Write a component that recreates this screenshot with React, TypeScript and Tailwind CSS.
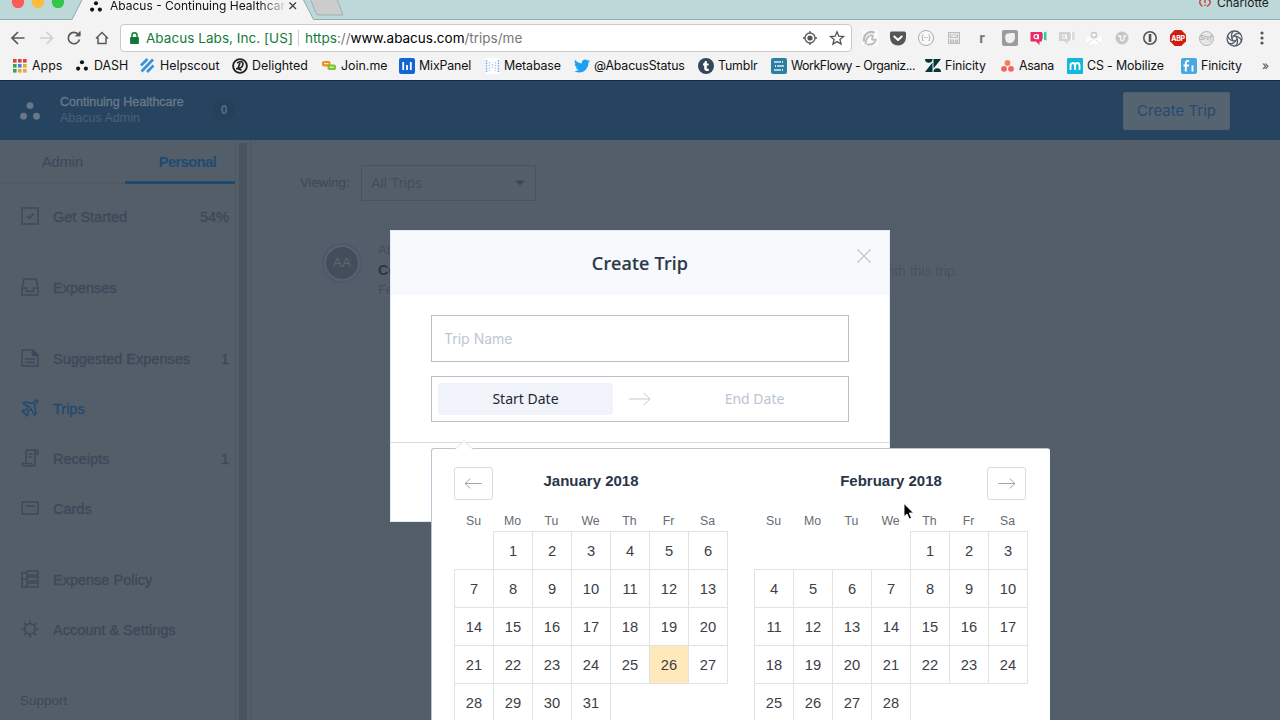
import React from "react";
import { FaTwitter, FaTumblr, FaGetPocket } from "react-icons/fa";

/* ---------- Browser chrome ---------- */

function AbacusDots({ className, fill }: { className: string; fill: string }) {
  return (
    <svg className={className} viewBox="0 0 20 18" fill={fill}>
      <circle cx="10" cy="3.6" r="3.4" />
      <circle cx="3.5" cy="14.2" r="3.4" />
      <circle cx="16.5" cy="14.2" r="3.4" />
    </svg>
  );
}

function TabStrip() {
  return (
    <div className="relative flex h-[20px] shrink-0 items-start bg-[#bcd8d9]">
      <svg className="absolute inset-0" width="1280" height="20">
        <path d="M0 19.5H1280" stroke="#93b0b1" />
        <path d="M72 20L83.5 -3H302L314 20Z" fill="#f4f4f5" />
        <path d="M0 19.5H72L83.5 -3M302 -3L313.5 19.5H320" fill="none" stroke="#93a9ab" />
        <path d="M310 -2L315.5 12Q316.500 15 319 15H343L336.500 -2Z" fill="#cbcdcd" stroke="#9fb0b1" />
        <circle cx="18" cy="2" r="6.200" fill="#fc5b57" />
        <circle cx="38" cy="2" r="6.200" fill="#fdbc40" />
        <circle cx="58" cy="2" r="6.200" fill="#34c648" />
        <path d="M289.500 2.500L296 9M296 2.500L289.500 9" stroke="#3f3f3f" strokeWidth="1.300" />
        <g fill="none" stroke="#c94a3e" strokeWidth="1.500">
          <path d="M1201.500 -1Q1197.500 2.500 1202.500 6.500M1208 -1Q1213 2.500 1207 6.500" />
          <path d="M1205 -1V3M1205 4.500V6" />
        </g>
      </svg>
      <AbacusDots className="relative ml-[90px] mt-px h-[11px] w-[12px]" fill="#111" />
      <div className="relative ml-[8px] -mt-[2px] w-[175px] whitespace-nowrap bg-gradient-to-r from-[#111] from-85% to-[#d8d8d8] bg-clip-text text-[12px] leading-[16px] text-transparent">
        Abacus - Continuing Healthcar
      </div>
      <div className="relative ml-auto mr-[12px] -mt-[5px] w-[51px] whitespace-nowrap text-[12px] leading-[16px] text-[#222]">
        Charlotte
      </div>
    </div>
  );
}

function NavIcons() {
  return (
    <svg width="120" height="32" fill="none" stroke="#595959" strokeWidth="1.700">
      <path d="M24.500 18H12.500M18 12L12 18L18 24" />
      <path d="M40 18H52M46.500 12L52.500 18L46.500 24" stroke="#cfcfcf" />
      <path d="M78.500 14.500A5.700 5.700 0 1 0 79.500 19.500" />
      <path d="M80.200 11.500V16H75.500Z" fill="#595959" strokeWidth="0.800" />
      <path d="M96 18.500L102 12.500L108 18.500M98 17.500V23.500H106V17.500" strokeWidth="1.500" />
    </svg>
  );
}

function AddressBar() {
  return (
    <div className="my-[4px] flex h-[28px] w-[732px] items-center rounded-[4px] border border-[#c9c9c9] bg-white text-[13.5px]">
      <svg className="ml-[8px] h-[14px] w-[11px]" viewBox="0 0 10 12">
        <rect x="1" y="5" width="8" height="6.500" rx="0.700" fill="#0b7a35" />
        <path d="M2.700 5.500V3.500a2.300 2.300 0 0 1 4.600 0V5.500" fill="none" stroke="#0b7a35" strokeWidth="1.300" />
      </svg>
      <span className="ml-[6px] w-[152px] whitespace-nowrap tracking-[0.05px] text-[#147a3a]">Abacus Labs, Inc. [US]</span>
      <span className="h-[16px] w-px bg-[#cfcfcf]" />
      <span className="ml-[6px] whitespace-nowrap text-[#777]">
        <span className="text-[#147a3a]">https</span>://<span className="text-black">www.abacus.com</span>/trips/me
      </span>
      <svg className="ml-auto mr-[5px]" width="44" height="18" fill="none" stroke="#555">
        <circle cx="8" cy="9" r="5" strokeWidth="1.300" />
        <circle cx="8" cy="9" r="2.600" fill="#555" stroke="none" />
        <path d="M8 2V4M8 14V16M1 9H3M13 9H15" strokeWidth="1.300" />
        <path d="M35 2.800L36.800 7.200L41.500 7.500L37.900 10.500L39.100 15.100L35 12.600L30.900 15.100L32.100 10.500L28.500 7.500L33.200 7.200Z" strokeWidth="1.300" />
      </svg>
    </div>
  );
}

function Extensions() {
  const cell = "flex h-[36px] w-[28px] items-center justify-center";
  return (
    <div className="ml-[4px] flex">
      <div className={cell}>
        <svg width="16" height="16" viewBox="0 0 16 16">
          <rect width="16" height="16" fill="#fafafa" />
          <path d="M2 11.500Q1.500 5 6 2.800Q10 1 12.500 3" fill="none" stroke="#b9b9b9" strokeWidth="2.200" />
          <path d="M3.500 14.500Q4 6.500 8.500 5.300Q12 5 10.300 8Q8.800 10.800 14.500 9.500" fill="none" stroke="#bdbdbd" strokeWidth="1.900" />
          <path d="M5 14.500Q11 15.500 14 10.500" fill="none" stroke="#b9b9b9" strokeWidth="1.600" />
        </svg>
      </div>
      <div className={cell}>
        <svg width="16" height="15" viewBox="0 0 16 15">
          <path d="M1.500 0.500H14.500Q16 0.500 16 2V6.500A8 8 0 0 1 0 6.500V2Q0 0.500 1.500 0.500Z" fill="#555" />
          <path d="M4.300 5.500L8 9L11.700 5.500" fill="none" stroke="#fff" strokeWidth="2" strokeLinecap="round" strokeLinejoin="round" />
        </svg>
      </div>
      <div className={cell}>
        <span className="flex h-[16px] w-[16px] items-center justify-center rounded-full border border-[#aaa] bg-[#f9f9f9] pb-px text-[7px] leading-none text-[#888]">{"{··}"}</span>
      </div>
      <div className={cell}>
        <svg width="12" height="12" fill="none" stroke="#bcbcbc" strokeWidth="1.200">
          <path d="M0.600 0.600H11.400V11.400H0.600ZM2.500 3H9.500V5.500H2.500ZM2.500 8H5.500V9.800H2.500ZM7.500 8H9.500V9.800H7.500Z" />
        </svg>
      </div>
      <div className={cell + " pb-px text-[14px] font-bold text-[#777]"}>r</div>
      <div className={cell}>
        <svg width="16" height="16" viewBox="0 0 16 16">
          <rect width="16" height="16" rx="2" fill="#9b9b9b" />
          <path d="M4 4Q8 2.500 12.500 3Q14 8 11.500 11.500Q8 14.500 4.500 12Q2 8 4 4Z" fill="#f0f0f0" />
        </svg>
      </div>
      <div className={cell}>
        <svg width="17" height="14" viewBox="0 0 17 14">
          <path d="M11 2.500L16.500 0.500V9.500L11 8Z" fill="#43c59b" />
          <path d="M0.500 1H12V10.500H9.500V14L6 10.500H0.500Z" fill="#e92a63" />
          <circle cx="6" cy="5.700" r="2" fill="none" stroke="#fff" strokeWidth="1.200" />
          <path d="M8.400 3.300V8.300" stroke="#fff" strokeWidth="1.200" />
          <path d="M13.500 1V9" stroke="#f3f3f3" />
        </svg>
      </div>
      <div className={cell}>
        <svg width="17" height="14" viewBox="0 0 17 14">
          <path d="M11 2.500L16.500 0.500V9.500L11 8Z" fill="#dadada" />
          <path d="M1 1H12V10H9.500V13L6 10H1Z" fill="#d2d2d2" />
          <circle cx="6" cy="5.600" r="1.900" fill="none" stroke="#fff" />
          <path d="M8.400 3.500V8M13.500 1V9" stroke="#fff" />
        </svg>
      </div>
      <div className={cell}>
        <svg width="16" height="14" viewBox="0 0 16 14">
          <path d="M0.500 5L8 10L15.500 5V13H0.500Z" fill="#fff" />
          <path d="M1 13L6 9M15 13L10 9" stroke="#ddd" />
          <circle cx="8" cy="4" r="2.500" fill="#fff" stroke="#c9c9c9" strokeWidth="1.500" />
        </svg>
      </div>
      <div className={cell}>
        <svg width="14" height="14" viewBox="0 0 14 14">
          <circle cx="7" cy="7" r="6.500" fill="#c6c6c6" />
          <path d="M3 5H5.500V8A1.700 1.700 0 0 0 9 8V5H11.500" fill="none" stroke="#f5f5f5" strokeWidth="1.500" />
        </svg>
      </div>
      <div className={cell}>
        <svg width="16" height="16" viewBox="0 0 16 16">
          <circle cx="8" cy="8" r="6.200" fill="none" stroke="#555" strokeWidth="1.600" />
          <path d="M8 4V12" stroke="#555" strokeWidth="2.600" />
        </svg>
      </div>
      <div className={cell}>
        <span className="relative flex h-[16px] w-[16px] items-center justify-center text-[7px] font-bold leading-none text-white">
          <svg className="absolute inset-0" width="16" height="16">
            <path d="M4.700 0H11.300L16 4.700V11.300L11.300 16H4.700L0 11.300V4.700Z" fill="#d01d14" />
          </svg>
          <span className="relative -mx-2 tracking-[-0.3px]">ABP</span>
        </span>
      </div>
      <div className={cell}>
        <span className="flex h-[15px] w-[15px] items-center justify-center rounded-full border border-[#b5b5b5] bg-[#e6e6e6] text-[6px] italic leading-none text-[#999]">Srvf</span>
      </div>
      <div className={cell}>
        <svg width="17" height="17" viewBox="-8.500 -8.500 17 17" fill="none" stroke="#555c6a" strokeWidth="1.300">
          <circle r="7.500" />
          <path d="M-2.600 0L-1.300 -2.300H1.300L2.600 0L1.300 2.300H-1.300Z" />
          <path d="M-1.300 -2.300Q2 -6.500 6 -4.500M1.300 -2.300Q6.500 -1 6.800 3M2.600 0Q4 5 1 7.300M1.300 2.300Q-2 6.500 -6 4.500M-1.300 2.300Q-6.500 1 -6.800 -3M-2.600 0Q-4 -5 -1 -7.300" />
        </svg>
      </div>
      <div className={cell}>
        <svg width="4" height="14" fill="#555">
          <circle cx="2" cy="2" r="1.600" /><circle cx="2" cy="7" r="1.600" /><circle cx="2" cy="12" r="1.600" />
        </svg>
      </div>
    </div>
  );
}

function AppsIcon() {
  const colors = ["#d8433b", "#d8433b", "#d8433b", "#3aa257", "#4285d6", "#e5a83b", "#3aa257", "#e5a83b", "#e5a83b"];
  return (
    <svg width="14" height="14">
      {colors.map((c, i) => (
        <rect key={i} x={(i % 3) * 5} y={Math.floor(i / 3) * 5} width="3.600" height="3.600" fill={c} />
      ))}
    </svg>
  );
}

const bookmarks: { label: string; item: string; text: string; icon: React.ReactNode }[] = [
  { label: "Apps", item: "w-[63px]", text: "ml-[5px]", icon: <AppsIcon /> },
  { label: "DASH", item: "w-[64px]", text: "ml-[6px]", icon: <AbacusDots className="h-[11px] w-[12px]" fill="#111" /> },
  {
    label: "Helpscout", item: "w-[92px]", text: "ml-[5px]",
    icon: (
      <svg width="15" height="15" stroke="#3693d6" strokeWidth="2.600">
        <path d="M1 7.500L7.500 1M1.500 13.500L13 1.500M7 14L13.500 7.500" />
      </svg>
    ),
  },
  {
    label: "Delighted", item: "w-[90px]", text: "ml-[4px]",
    icon: (
      <svg width="16" height="16" viewBox="0 0 16 16" fill="none" stroke="#222" strokeWidth="1.900">
        <circle cx="8" cy="8" r="6.900" />
        <path d="M5 5Q10 2 11 5.500Q11 10 6 10.500M8 5L5.500 11.500M4 10.500Q6.500 10.500 9.500 12.300" strokeWidth="1.700" />
      </svg>
    ),
  },
  {
    label: "Join.me", item: "w-[77px]", text: "ml-[5px]",
    icon: (
      <svg width="14" height="12">
        <rect x="0" y="1" width="8.500" height="5.500" rx="2" fill="#f58b1f" />
        <rect x="5.500" y="4.500" width="8.500" height="5.500" rx="2" fill="#76c32d" />
        <path d="M2 3.700H6.500M7.500 7.200H12" stroke="#fff" />
      </svg>
    ),
  },
  {
    label: "MixPanel", item: "w-[86px]", text: "ml-[4px] tracking-[-0.15px]",
    icon: (
      <svg width="16" height="16">
        <rect width="16" height="16" rx="2" fill="#1166d6" />
        <path d="M4.200 4V12M8 7V12M11.800 4V12" stroke="#fff" strokeWidth="1.800" />
      </svg>
    ),
  },
  {
    label: "Metabase", item: "w-[89px]", text: "ml-[4px] tracking-[-0.15px]",
    icon: (
      <svg width="15" height="16">
        <rect width="15" height="16" fill="#fff" />
        <path d="M1.500 2V14M13.500 2V14" stroke="#78aee6" strokeWidth="1.600" strokeDasharray="1.600 1" />
        <path d="M4.500 4V13M7.500 6V10M10.500 4V13" stroke="#aacbee" strokeWidth="1.400" strokeDasharray="1.500 1.200" />
      </svg>
    ),
  },
  { label: "@AbacusStatus", item: "w-[124px]", text: "ml-[4px] tracking-[-0.15px]", icon: <FaTwitter className="h-[16px] w-[16px] text-[#1da1f2]" /> },
  {
    label: "Tumblr", item: "w-[73px]", text: "ml-[4px] tracking-[-0.15px]",
    icon: (
      <span className="flex h-[16px] w-[16px] items-center justify-center rounded-full bg-[#35465c]">
        <FaTumblr className="h-[10px] w-[8px] text-white" />
      </span>
    ),
  },
  {
    label: "WorkFlowy - Organiz...", item: "w-[154px]", text: "ml-[4px] tracking-[-0.47px]",
    icon: (
      <svg width="16" height="16">
        <rect width="16" height="16" rx="2" fill="#2c7fa3" />
        <path d="M3 4H10M6 8H13M3 12H10" stroke="#d8edf5" strokeWidth="1.400" />
        <path d="M11.500 3V5M4.500 7V9M11.500 11V13" stroke="#d8edf5" />
      </svg>
    ),
  },
  {
    label: "Finicity", item: "w-[76px]", text: "ml-[4px] tracking-[-0.15px]",
    icon: (
      <svg width="16" height="13" fill="#03363d">
        <path d="M0 0H7.500A3.700 3.700 0 0 1 0 0ZM7.500 3.500V13H0ZM8.500 0H16L8.500 9.500ZM8.500 13A3.700 3.700 0 0 1 16 13Z" />
      </svg>
    ),
  },
  {
    label: "Asana", item: "w-[66px]", text: "ml-[5px] tracking-[-0.25px]",
    icon: (
      <svg width="13" height="12" fill="#f4625a">
        <circle cx="6.500" cy="3" r="2.900" fill="#f08058" /><circle cx="3" cy="8.800" r="2.900" /><circle cx="10" cy="8.800" r="2.900" />
      </svg>
    ),
  },
  {
    label: "CS - Mobilize", item: "w-[114px]", text: "ml-[4px] tracking-[-0.15px]",
    icon: (
      <svg width="16" height="16">
        <rect width="16" height="16" rx="1" fill="#10b8dc" />
        <path d="M3.500 12V5.500M3.500 7.500Q4 5 6 5Q8 5 8 7.500V12M8 7.500Q8.500 5 10.500 5Q12.500 5 12.500 7.500V12" fill="none" stroke="#fff" strokeWidth="1.800" />
      </svg>
    ),
  },
  {
    label: "Finicity", item: "w-[80px]", text: "ml-[4px] tracking-[-0.15px]",
    icon: (
      <svg width="16" height="16">
        <rect width="16" height="16" rx="2" fill="#4aa8e0" />
        <path d="M8 3Q4.800 2.300 4.800 5.500V13.500M2.500 7.500H8M11.500 7.500V13.500" fill="none" stroke="#fff" strokeWidth="1.900" />
      </svg>
    ),
  },
];

function BrowserChrome() {
  return (
    <div className="flex h-[80px] shrink-0 flex-col bg-[#f3f3f4]">
      <TabStrip />
      <div className="flex h-[36px] shrink-0">
        <NavIcons />
        <AddressBar />
        <Extensions />
      </div>
      <div className="flex h-[20px] items-center pl-[13px] text-[12.4px] text-[#111]">
        {bookmarks.map((b, i) => (
          <div key={i} className={"flex shrink-0 items-center whitespace-nowrap " + b.item}>
            <span className="shrink-0">{b.icon}</span>
            <span className={b.text}>{b.label}</span>
          </div>
        ))}
        <span className="ml-px -mt-px text-[12px] text-[#444]">»</span>
      </div>
    </div>
  );
}

/* ---------- Application ---------- */

const icons: Record<string, React.ReactNode> = {
  check: <path d="M1 1H17V17H1ZM6 9L8.500 11.500L12.500 6.500" />,
  inbox: <path d="M3 1H15L17 10V17H1V10ZM1 10H5.500V13.500H12.500V10H17" />,
  doc: <><path d="M1 1H12L17 6V17H1ZM4 10H14M4 13.500H14" /><path d="M11.500 1V6.500H17Z" fill="currentColor" /></>,
  plane: <path d="M15 1.200Q17.300 0.700 16.800 3L13.500 6.300L15 14.500L13.500 16L10 9.800L7 12.800V15.500L5.500 17L4 14L1 12.500L2.500 11H5L8.200 8L2 4.500L3.500 3L11.700 4.500Z" />,
  receipt: <path d="M5 14V3Q5 1 7 1H15.500Q17 1 17 3V5H14M14 5V15Q14 17 12 17H3Q1 17 1 14.500H10.500Q10.500 17 12 17M14 5V2.500Q14 1 15.500 1M7.500 5H11.500M7.500 8H11.500" />,
  card: <path d="M1 3H17V15H1ZM4.500 7H14M12.500 11.500H14" />,
  policy: <path d="M1 1V17H6M1 9H6M1 3H6M6 1H17V5H6ZM6 7H17V11H6ZM6 13H17V17H6Z" strokeWidth="1.500" />,
  gear: <><circle cx="9" cy="9" r="5.300" /><path d="M9 0.300V3.700M9 14.300V17.700M0.300 9H3.700M14.300 9H17.700M2.900 2.900L5.200 5.200M12.800 12.800L15.100 15.100M15.100 2.900L12.800 5.200M5.200 12.800L2.900 15.100" /></>,
};

const nav = [
  { icon: "check", label: "Get Started", count: "54%", cls: "mb-[21px]" },
  { icon: "inbox", label: "Expenses", count: "", cls: "mb-[21px]" },
  { icon: "doc", label: "Suggested Expenses", count: "1", cls: "" },
  { icon: "plane", label: "Trips", count: "", cls: "text-[#1f4b70]" },
  { icon: "receipt", label: "Receipts", count: "1", cls: "" },
  { icon: "card", label: "Cards", count: "", cls: "mb-[21px]" },
  { icon: "policy", label: "Expense Policy", count: "", cls: "" },
  { icon: "gear", label: "Account & Settings", count: "", cls: "" },
];

function Header() {
  return (
    <header className="flex h-[60px] shrink-0 items-center border-t border-[#172c44] bg-[#26445f]">
      <AbacusDots className="ml-[20px] h-[18px] w-[20px]" fill="#68778a" />
      <div className="-mt-[2px] ml-[20px] w-[153px] whitespace-nowrap text-[12.5px] leading-[16px]">
        <div className="text-[#6a7a8b] [-webkit-text-stroke:0.3px]">Continuing Healthcare</div>
        <div className="text-[#48617a]">Abacus Admin</div>
      </div>
      <span className="-mt-px flex h-[22px] w-[22px] items-center justify-center rounded-full bg-[#24405b] text-[12px] font-bold text-[#5a6c7f]">0</span>
      <span className="ml-[15px] h-full w-px bg-[#24415c]" />
      <button className="ml-auto mr-[50px] h-[38px] w-[107px] rounded-[2px] border border-[#4f6072] bg-[#566370] pt-[2px] font-[Inter] text-[15px] text-[#264b6f]">
        Create Trip
      </button>
    </header>
  );
}

function Sidebar() {
  return (
    <aside className="flex w-[251px] shrink-0 border-r border-[#4d5763]">
      <div className="w-[235px] text-[#3d485a]">
        <div className="flex h-[44px] text-[14.5px]">
          <div className="w-[125px] border-b border-[#505a66] pt-[12px] text-center [-webkit-text-stroke:0.1px]">Admin</div>
          <div className="flex-1 border-b-[3px] border-[#1f4a6e] pl-[15px] pt-[12px] text-center font-bold tracking-[-0.45px] text-[#1e4b70]">Personal</div>
        </div>
        <nav className="mt-[8px] text-[14.5px] [-webkit-text-stroke:0.35px]">
          {nav.map((n) => (
            <div key={n.label} className={"flex h-[50px] items-center pl-[21px] pr-[6px] pt-[2px] " + n.cls}>
              <svg className="-mt-[4px]" width="18" height="18" viewBox="0 0 18 18" fill="none" stroke="currentColor" strokeWidth="1.500">
                {icons[n.icon]}
              </svg>
              <span className="ml-[14px] flex-1 whitespace-nowrap">{n.label}</span>
              <span>{n.count}</span>
            </div>
          ))}
        </nav>
        <div className="mt-[36px] pl-[20px] text-[13.5px] leading-[20px]">Support</div>
      </div>
      <div className="mt-[3px] flex-1 border-l border-[#4f5965] pl-[3px]">
        <div className="h-full w-[8px] bg-[#49535f]" />
      </div>
    </aside>
  );
}

function TripsPage() {
  return (
    <main className="flex-1 pl-[49px] pt-[25px] text-[#434d5d]">
      <div className="flex h-[36px] items-center">
        <span className="w-[61px] text-[13.2px] text-[#3f4a5b] [-webkit-text-stroke:0.2px]">Viewing:</span>
        <div className="flex h-[36px] w-[175px] items-center justify-between border border-[#49535f] pl-[9px] pr-[10px]">
          <span className="pt-[2px] text-[14.3px]">All Trips</span>
          <svg width="10" height="6" fill="#3b4657"><path d="M0 0.500H10L5 5.500Z" /></svg>
        </div>
      </div>
      <div className="ml-[3px] mt-[23px] flex h-[92px] w-[925px] items-start rounded-[2px] border border-[#535d69] bg-[#545e6a] pl-[18px] pt-[18px]">
        <span className="flex h-[40px] w-[40px] items-center justify-center rounded-full bg-[#4d586a]">
          <span className="flex h-[36px] w-[36px] items-center justify-center rounded-full border-2 border-[#566271] bg-[#444e5a] text-[13.5px] text-[#5b6672]">AA</span>
        </span>
        <div className="ml-[16px] w-[503px] whitespace-nowrap text-[13px] leading-[20px]">
          <div className="-mt-[3px]">Abacus Admin</div>
          <div className="text-[14.5px] font-bold leading-[21px] text-[#2b3647]">Conference</div>
          <div className="-mt-px">Feb</div>
        </div>
        <span className="mt-[18px] text-[14px] leading-[20px] text-[#4a505f]">with this trip.</span>
      </div>
    </main>
  );
}

function ArrowRight({ className, stroke }: { className: string; stroke: string }) {
  return (
    <svg className={className} viewBox="0 0 22 14" fill="none" stroke={stroke}>
      <path d="M0 7H21M14.500 0.800L21.200 7L14.500 13.200" />
    </svg>
  );
}

function CreateTripModal() {
  return (
    <section className="absolute left-[390px] top-[230px] flex h-[292px] w-[500px] flex-col border border-[#e3e7ef] bg-white">
      <div className="flex h-[64px] items-center justify-center bg-[#f7f9fd]">
        <h1 className="font-['Noto_Sans'] text-[18px] font-medium tracking-[0.2px] text-[#2c3848] [-webkit-text-stroke:0.2px]">Create Trip</h1>
        <svg className="absolute right-[18px] top-[18px]" width="14" height="14" stroke="#bcc3cd" strokeWidth="1.200">
          <path d="M0.500 0.500L13.500 13.500M13.500 0.500L0.500 13.500" />
        </svg>
      </div>
      <div className="flex h-[148px] flex-col border-b border-[#d4d8e0] px-[40px] pt-[20px]">
        <div className="flex h-[47px] items-center border border-[#b7becc] pl-[12px] font-[Inter] text-[14px] text-[#bfc6d2]">Trip Name</div>
        <div className="mt-[14px] flex h-[46px] items-center border border-[#b7becc] pl-[6px] font-['Noto_Sans'] text-[14px]">
          <div className="flex h-[32px] w-[175px] items-center justify-center rounded-[3px] bg-[#f0f3fa] pb-[2px] text-[#1f2733]">Start Date</div>
          <ArrowRight className="ml-[16px] h-[14px] w-[22px]" stroke="#c4c9d3" />
          <div className="ml-[16px] w-[175px] pb-[2px] text-center text-[#bcc4d2]">End Date</div>
        </div>
      </div>
    </section>
  );
}

const weekdays = ["Su", "Mo", "Tu", "We", "Th", "Fr", "Sa"];

function Month({ title, offset, days, today }: { title: string; offset: number; days: number; today?: number }) {
  const cells = [
    ...Array.from({ length: offset }, () => 0),
    ...Array.from({ length: days }, (_, i) => i + 1),
  ];
  return (
    <div className="w-[274px]">
      <h2 className="mt-[22px] text-center text-[15px] font-bold leading-[20px] text-[#293548]">{title}</h2>
      <div className="mt-[21px] grid grid-cols-[repeat(7,39px)] pb-px text-center text-[12.3px] leading-[18px] text-[#666b73]">
        {weekdays.map((d) => <span key={d}>{d}</span>)}
      </div>
      <div className="grid auto-rows-[38px] grid-cols-[repeat(7,39px)] text-[14.7px] text-[#3c4045]">
        {cells.map((d, i) =>
          d === 0 ? (
            <span key={i} />
          ) : (
            <span
              key={i}
              className={"flex h-[39px] w-[40px] items-center justify-center border border-[#e1e2e3] pt-px " + (d === today ? "bg-[#ffe8bc]" : "")}
            >
              {d}
            </span>
          )
        )}
      </div>
    </div>
  );
}

function DatePicker() {
  return (
    <section className="absolute left-[431px] top-[448px] flex h-[300px] w-[619px] rounded-[3px] border border-[#bcc3d2] border-r-white bg-white pl-[22px]">
      <svg className="absolute left-[22px] top-[-9px]" width="20" height="11">
        <path d="M0 10L10 0.500L20 10V11H0Z" fill="#fff" />
        <path d="M1 9.500L10 0.800L19 9.500" fill="none" stroke="#dcdfe5" />
      </svg>
      <button className="absolute left-[22px] top-[18px] flex h-[33px] w-[39px] items-center justify-center rounded-[3px] border border-[#d9dbdd]">
        <ArrowRight className="-ml-px h-[11px] w-[18px] rotate-180" stroke="#858b92" />
      </button>
      <Month title="January 2018" offset={1} days={31} today={26} />
      <div className="w-[26px]" />
      <Month title="February 2018" offset={4} days={28} />
      <button className="absolute left-[555px] top-[18px] flex h-[33px] w-[39px] items-center justify-center rounded-[3px] border border-[#d9dbdd]">
        <ArrowRight className="h-[11px] w-[18px]" stroke="#858b92" />
      </button>
    </section>
  );
}

export default function App() {
  return (
    <div className="relative flex h-[720px] w-[1280px] flex-col overflow-hidden bg-[#545e69] font-['Liberation_Sans',sans-serif]">
      <div className="font-[Inter,sans-serif]"><BrowserChrome /></div>
      <Header />
      <div className="flex min-h-0 flex-1">
        <Sidebar />
        <TripsPage />
      </div>
      <CreateTripModal />
      <DatePicker />
      <svg className="absolute left-[902px] top-[502px]" width="14" height="19">
        <path d="M2 1.500V14.500L5 12L7.200 17L9.500 16L7.300 11H11.500Z" fill="#000" stroke="#fff" strokeWidth="0.900" />
      </svg>
    </div>
  );
}
